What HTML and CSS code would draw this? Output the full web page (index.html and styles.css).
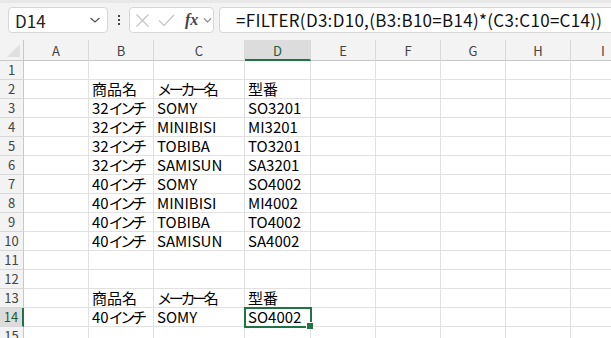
FILE: index.html
```html
<!DOCTYPE html>
<html lang="ja">
<head>
  <meta charset="UTF-8">
  <title>FILTER</title>
  <link rel="stylesheet" href="styles.css">
</head>
<body>
  <div class="toolbar">
    <div class="name-box">
      <span>D14</span>
      <svg class="chev" width="12" height="8" viewBox="0 0 12 8"><path d="M1.5 2 L6 6 L10.5 2" fill="none" stroke="#555" stroke-width="1.3"/></svg>
    </div>
    <div class="dots"><i></i><i></i><i></i></div>
    <div class="fx-box">
      <svg width="15" height="15" viewBox="0 0 15 15"><path d="M1.5 1.5 L13.5 13.5 M13.5 1.5 L1.5 13.5" stroke="#c4c4c4" stroke-width="1.2"/></svg>
      <svg width="17" height="15" viewBox="0 0 17 15"><path d="M1 7.5 L6 12.5 L16 2" fill="none" stroke="#c4c4c4" stroke-width="1.2"/></svg>
      <span class="fx">fx</span>
      <svg width="9" height="8" viewBox="0 0 9 8"><path d="M1 2.5 L4.5 6 L8 2.5" fill="none" stroke="#888" stroke-width="1.1"/></svg>
    </div>
    <div class="formula">=FILTER(D3:D10,(B3:B10=B14)*(C3:C10=C14))</div>
  </div>

  <div class="sheet" id="sheet"></div>

  <script>
    const cols = ['A','B','C','D','E','F','G','H','I'];
    const data = {
      2: ['', '商品名', 'メーカー名', '型番'],
      3: ['', '32インチ', 'SOMY', 'SO3201'],
      4: ['', '32インチ', 'MINIBISI', 'MI3201'],
      5: ['', '32インチ', 'TOBIBA', 'TO3201'],
      6: ['', '32インチ', 'SAMISUN', 'SA3201'],
      7: ['', '40インチ', 'SOMY', 'SO4002'],
      8: ['', '40インチ', 'MINIBISI', 'MI4002'],
      9: ['', '40インチ', 'TOBIBA', 'TO4002'],
      10: ['', '40インチ', 'SAMISUN', 'SA4002'],
      13: ['', '商品名', 'メーカー名', '型番'],
      14: ['', '40インチ', 'SOMY', 'SO4002']
    };
    const sheet = document.getElementById('sheet');

    // katakana runs are set tighter, like the proportional kana of the original font
    function fill(el, text) {
      text.split(/([\u30A0-\u30FF]+)/).forEach(part => {
        if (!part) return;
        if (/[\u30A0-\u30FF]/.test(part)) {
          const s = document.createElement('span');
          s.className = 'kana';
          s.textContent = part;
          el.appendChild(s);
        } else {
          el.appendChild(document.createTextNode(part));
        }
      });
    }

    const corner = document.createElement('div');
    corner.className = 'corner';
    sheet.appendChild(corner);
    cols.forEach(c => {
      const h = document.createElement('div');
      h.className = 'col-head' + (c === 'D' ? ' active' : '');
      h.textContent = c;
      sheet.appendChild(h);
    });

    for (let r = 1; r <= 15; r++) {
      const rh = document.createElement('div');
      rh.className = 'row-head' + (r === 14 ? ' active' : '');
      rh.textContent = r;
      sheet.appendChild(rh);
      cols.forEach((c, i) => {
        const cell = document.createElement('div');
        cell.className = 'cell';
        if (r === 14 && c === 'D') cell.classList.add('selected');
        const row = data[r];
        if (row && row[i]) fill(cell, row[i]);
        sheet.appendChild(cell);
      });
    }
  </script>
</body>
</html>
```

FILE: styles.css
```css
* {
  margin: 0;
  padding: 0;
  box-sizing: border-box;
}

html, body {
  width: 611px;
  height: 338px;
  overflow: hidden;
  background: #fff;
  font-family: "Noto Sans CJK JP", "Noto Sans", sans-serif;
}

.toolbar {
  height: 40px;
  background: #f3f3f3;
  border-top: 3px solid #e8e8e8;
  display: flex;
  align-items: flex-start;
  padding: 4px 0 0 8px;
}

.name-box {
  width: 100px;
  height: 26px;
  background: #fff;
  border: 1px solid #d6d6d6;
  border-radius: 4px;
  display: flex;
  align-items: center;
  justify-content: space-between;
  padding: 0 6px 0 6px;
  font-size: 17px;
  color: #222;
}

.dots {
  width: 21px;
  height: 26px;
  display: flex;
  flex-direction: column;
  align-items: center;
  justify-content: center;
  gap: 2px;
}

.dots i {
  width: 2px;
  height: 2px;
  background: #444;
}

.fx-box {
  width: 85px;
  height: 26px;
  background: #fff;
  border: 1px solid #d6d6d6;
  border-radius: 4px;
  display: flex;
  align-items: center;
  gap: 7px;
  padding-left: 5px;
}

.fx-box svg:nth-child(2) {
  margin-left: 1px;
}

.fx {
  font-family: "Liberation Serif", serif;
  font-style: italic;
  font-weight: bold;
  font-size: 16px;
  color: #444;
  margin-left: 3px;
  margin-right: -2px;
}

.formula {
  flex: 1;
  height: 26px;
  margin-left: 5px;
  background: #fff;
  border: 1px solid #d6d6d6;
  border-right: none;
  border-radius: 4px 0 0 4px;
  font-size: 17px;
  letter-spacing: 0.3px;
  line-height: 24px;
  padding-left: 16px;
  color: #111;
  white-space: nowrap;
}

.sheet {
  display: grid;
  grid-template-columns: 24px 65px 65px 91px 66px 65px 65px 65px 65px 65px;
  grid-template-rows: 21px repeat(15, 19px);
}

.corner {
  background: #f3f3f3;
  border-bottom: 1px solid #c8c8c8;
  border-right: 1px solid #c8c8c8;
  position: relative;
}

.corner::after {
  content: "";
  position: absolute;
  right: 3px;
  bottom: 3px;
  border-left: 13px solid transparent;
  border-bottom: 13px solid #dfdfdf;
}

.col-head {
  background: #f3f3f3;
  border-right: 1px solid #d8d8d8;
  border-bottom: 1px solid #c8c8c8;
  color: #444;
  font-size: 13px;
  text-align: center;
  line-height: 21px;
}

.col-head.active {
  background: #dcdcdc;
  border-bottom: 2px solid #217346;
  color: #1e5e3a;
}

.row-head {
  background: #f3f3f3;
  border-right: 1px solid #c8c8c8;
  border-bottom: 1px solid #d8d8d8;
  color: #444;
  font-size: 13px;
  text-align: center;
  line-height: 18px;
}

.row-head.active {
  background: #dcdcdc;
  border-right: 2px solid #217346;
  color: #1e5e3a;
}

.cell {
  border-right: 1px solid #e1e1e1;
  border-bottom: 1px solid #e1e1e1;
  font-size: 15px;
  line-height: 18px;
  padding-left: 3px;
  color: #000;
  white-space: nowrap;
}

.kana {
  letter-spacing: -3.3px;
}

.cell.selected {
  position: relative;
  outline: 2px solid #217346;
  outline-offset: -1px;
}

.cell.selected::after {
  content: "";
  position: absolute;
  right: -4px;
  bottom: -4px;
  width: 6px;
  height: 6px;
  background: #217346;
  border: 1px solid #fff;
}
```
